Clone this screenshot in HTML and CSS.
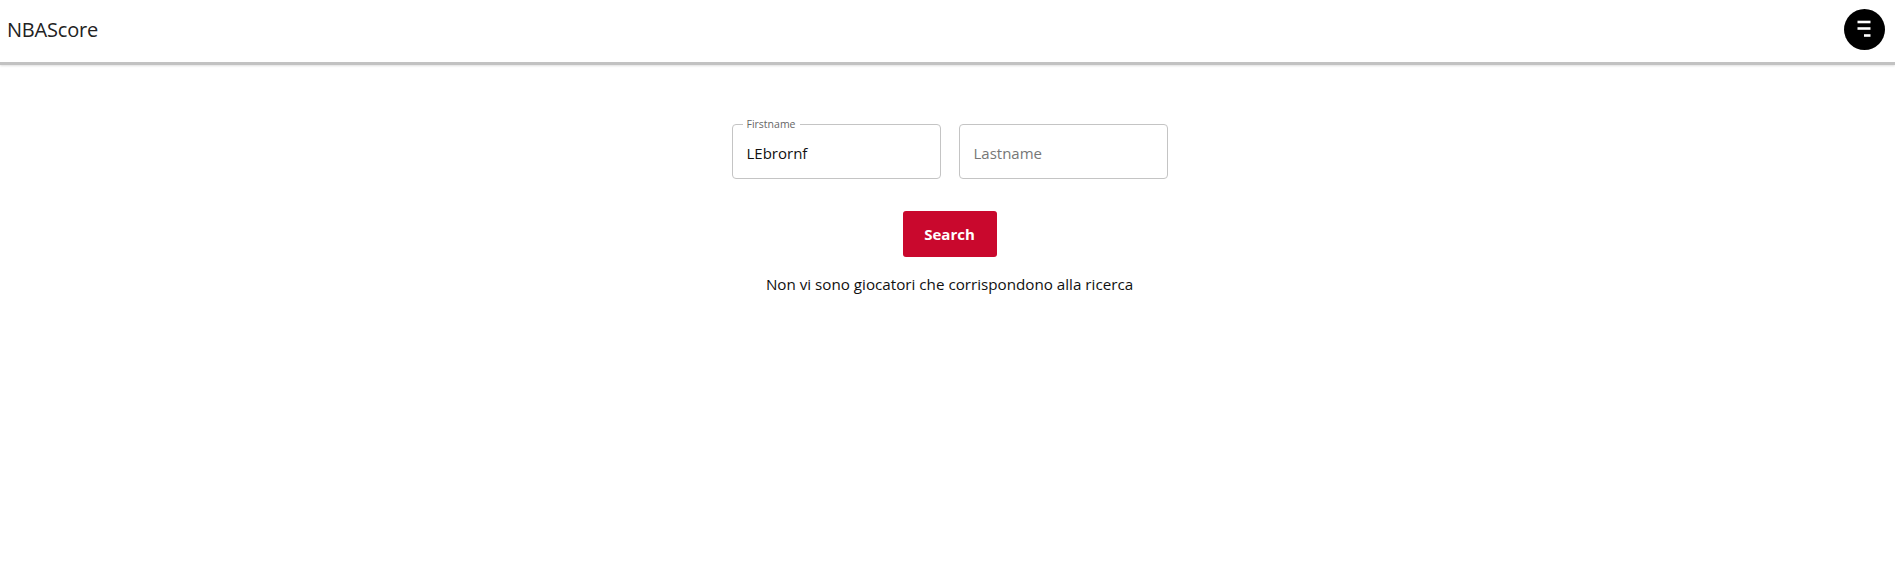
FILE: index.html
```html
<!DOCTYPE html>
<html lang="it">
<head>
<meta charset="utf-8">
<title>NBAScore</title>
<link rel="stylesheet" href="styles.css">
</head>
<body>
<header class="topbar">
  <div class="brand">NBAScore</div>
  <button class="menu-btn" aria-label="menu">
    <svg width="41" height="41" viewBox="0 0 41 41">
      <circle cx="20.5" cy="20.5" r="20.5" fill="#000"/>
      <g stroke="#fff" stroke-width="2.6">
        <line x1="13.5" y1="13" x2="26.5" y2="13"/>
        <line x1="13.5" y1="19.5" x2="26.5" y2="19.5"/>
        <line x1="20" y1="26.5" x2="26.5" y2="26.5"/>
      </g>
    </svg>
  </button>
</header>
<main class="content">
  <form class="search-form">
    <div class="fields">
      <div class="field">
        <span class="field-label">Firstname</span>
        <input class="field-input" type="text" value="LEbrornf">
      </div>
      <div class="field">
        <input class="field-input" type="text" placeholder="Lastname">
      </div>
    </div>
    <button class="search-btn" type="button">Search</button>
  </form>
  <p class="message">Non vi sono giocatori che corrispondono alla ricerca</p>
</main>
</body>
</html>
```
FILE: styles.css
```css
* { box-sizing: border-box; }
body {
  margin: 0;
  font-family: "Open Sans", "Noto Sans", sans-serif;
  color: #111;
  background: #fff;
}
.topbar {
  height: 65px;
  display: flex;
  align-items: center;
  justify-content: space-between;
  padding: 0 10px 3px 7px;
  border-bottom: 3px solid #c2c2c2;
  box-shadow: 0 1px 2px rgba(0,0,0,0.12);
}
.brand {
  font-size: 20px;
  color: #222;
  letter-spacing: -0.2px;
}
.menu-btn {
  border: 0;
  padding: 0;
  background: none;
  width: 41px;
  height: 41px;
  display: block;
  margin-top: -1px;
}
.menu-btn svg { display: block; }
.content {
  display: flex;
  flex-direction: column;
  align-items: center;
  padding-top: 59px;
  padding-left: 4px;
}
.search-form {
  display: flex;
  flex-direction: column;
  align-items: center;
}
.fields {
  display: flex;
  gap: 18px;
}
.field {
  position: relative;
  width: 209px;
  height: 55px;
  border: 1px solid #c4c4c4;
  border-radius: 4px;
}
.field-label {
  position: absolute;
  top: -8px;
  left: 10px;
  padding: 0 4px;
  background: #fff;
  font-size: 10.5px;
  line-height: 14px;
  color: #666;
}
.field-input {
  width: 100%;
  height: 100%;
  border: 0;
  outline: none;
  background: transparent;
  padding: 3px 14px 0;
  font-family: inherit;
  font-size: 15px;
  color: #111;
}
.field-input::placeholder { color: #777; }
.search-btn {
  margin-top: 32px;
  width: 94px;
  height: 46px;
  border: 0;
  border-radius: 3px;
  background: #c9082d;
  color: #fff;
  font-family: inherit;
  font-weight: 700;
  font-size: 15px;
}
.message {
  margin: 17px 0 0;
  font-size: 15.2px;
  line-height: 20px;
  color: #111;
}
```
